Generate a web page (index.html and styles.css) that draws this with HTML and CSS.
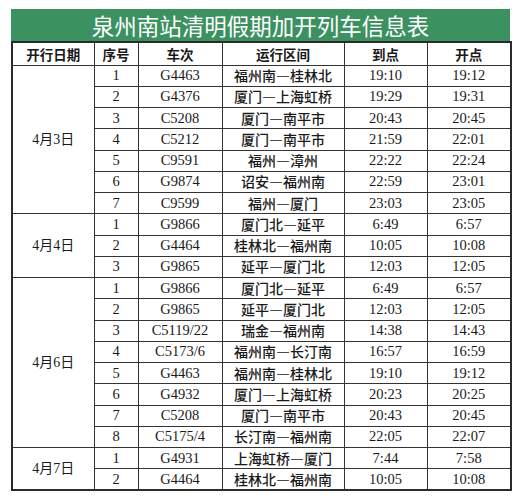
FILE: index.html
```html
<!DOCTYPE html>
<html lang="zh">
<head>
<meta charset="utf-8">
<title>泉州南站清明假期加开列车信息表</title>
<link rel="stylesheet" href="styles.css">
</head>
<body>
<div class="sheet">
  <div class="title">泉州南站清明假期加开列车信息表</div>
  <table class="trains">
    <colgroup>
      <col class="c-date"><col class="c-no"><col class="c-train"><col class="c-route"><col class="c-arr"><col class="c-dep">
    </colgroup>
    <thead>
      <tr><th>开行日期</th><th>序号</th><th>车次</th><th>运行区间</th><th>到点</th><th>开点</th></tr>
    </thead>
    <tbody>
      <tr><td class="date" rowspan="7">4月3日</td><td>1</td><td>G4463</td><td class="route">福州南—桂林北</td><td>19:10</td><td>19:12</td></tr>
      <tr><td>2</td><td>G4376</td><td class="route">厦门—上海虹桥</td><td>19:29</td><td>19:31</td></tr>
      <tr><td>3</td><td>C5208</td><td class="route">厦门—南平市</td><td>20:43</td><td>20:45</td></tr>
      <tr><td>4</td><td>C5212</td><td class="route">厦门—南平市</td><td>21:59</td><td>22:01</td></tr>
      <tr><td>5</td><td>C9591</td><td class="route">福州—漳州</td><td>22:22</td><td>22:24</td></tr>
      <tr><td>6</td><td>G9874</td><td class="route">诏安—福州南</td><td>22:59</td><td>23:01</td></tr>
      <tr><td>7</td><td>C9599</td><td class="route">福州—厦门</td><td>23:03</td><td>23:05</td></tr>

      <tr><td class="date" rowspan="3">4月4日</td><td>1</td><td>G9866</td><td class="route">厦门北—延平</td><td>6:49</td><td>6:57</td></tr>
      <tr><td>2</td><td>G4464</td><td class="route">桂林北—福州南</td><td>10:05</td><td>10:08</td></tr>
      <tr><td>3</td><td>G9865</td><td class="route">延平—厦门北</td><td>12:03</td><td>12:05</td></tr>

      <tr><td class="date" rowspan="8">4月6日</td><td>1</td><td>G9866</td><td class="route">厦门北—延平</td><td>6:49</td><td>6:57</td></tr>
      <tr><td>2</td><td>G9865</td><td class="route">延平—厦门北</td><td>12:03</td><td>12:05</td></tr>
      <tr><td>3</td><td>C5119/22</td><td class="route">瑞金—福州南</td><td>14:38</td><td>14:43</td></tr>
      <tr><td>4</td><td>C5173/6</td><td class="route">福州南—长汀南</td><td>16:57</td><td>16:59</td></tr>
      <tr><td>5</td><td>G4463</td><td class="route">福州南—桂林北</td><td>19:10</td><td>19:12</td></tr>
      <tr><td>6</td><td>G4932</td><td class="route">厦门—上海虹桥</td><td>20:23</td><td>20:25</td></tr>
      <tr><td>7</td><td>C5208</td><td class="route">厦门—南平市</td><td>20:43</td><td>20:45</td></tr>
      <tr><td>8</td><td>C5175/4</td><td class="route">长汀南—福州南</td><td>22:05</td><td>22:07</td></tr>

      <tr><td class="date" rowspan="2">4月7日</td><td>1</td><td>G4931</td><td class="route">上海虹桥—厦门</td><td>7:44</td><td>7:58</td></tr>
      <tr><td>2</td><td>G4464</td><td class="route">桂林北—福州南</td><td>10:05</td><td>10:08</td></tr>
    </tbody>
  </table>
</div>
</body>
</html>
```

FILE: styles.css
```css
html, body {
  margin: 0;
  padding: 0;
  background: #ffffff;
}

.sheet {
  padding: 9px 0 0 11px;
  width: 499px;
}

.title {
  height: 32px;
  line-height: 32px;
  background: #3b9160;
  color: #ffffff;
  text-align: center;
  font-family: "Noto Sans CJK SC", sans-serif;
  font-size: 22.5px;
  font-weight: 400;
}

.trains {
  width: 499px;
  table-layout: fixed;
  border-collapse: collapse;
  border: 2px solid #2b2b2b;
  color: #1a1a1a;
}

.c-date { width: 82px; }
.c-no { width: 44px; }
.c-train { width: 84px; }
.c-route { width: 122px; }
.c-arr { width: 83px; }
.c-dep { width: 84px; }

.trains th,
.trains td {
  border: 1px solid #333333;
  padding: 0;
  text-align: center;
  vertical-align: middle;
  white-space: nowrap;
  overflow: hidden;
}

.trains thead tr {
  height: 23px;
}

.trains th {
  font-family: "Noto Sans CJK SC", sans-serif;
  font-size: 13.5px;
  font-weight: 700;
  line-height: 20px;
}

.trains tbody tr {
  height: 21.25px;
}

.trains td {
  font-family: "Liberation Serif", "Noto Sans CJK SC", serif;
  font-size: 14.5px;
  line-height: 19px;
}

.trains td.route {
  font-family: "Noto Sans CJK SC", sans-serif;
  font-weight: 500;
  font-size: 14px;
}

.trains td.date {
  font-size: 14px;
  font-weight: 400;
}
```
